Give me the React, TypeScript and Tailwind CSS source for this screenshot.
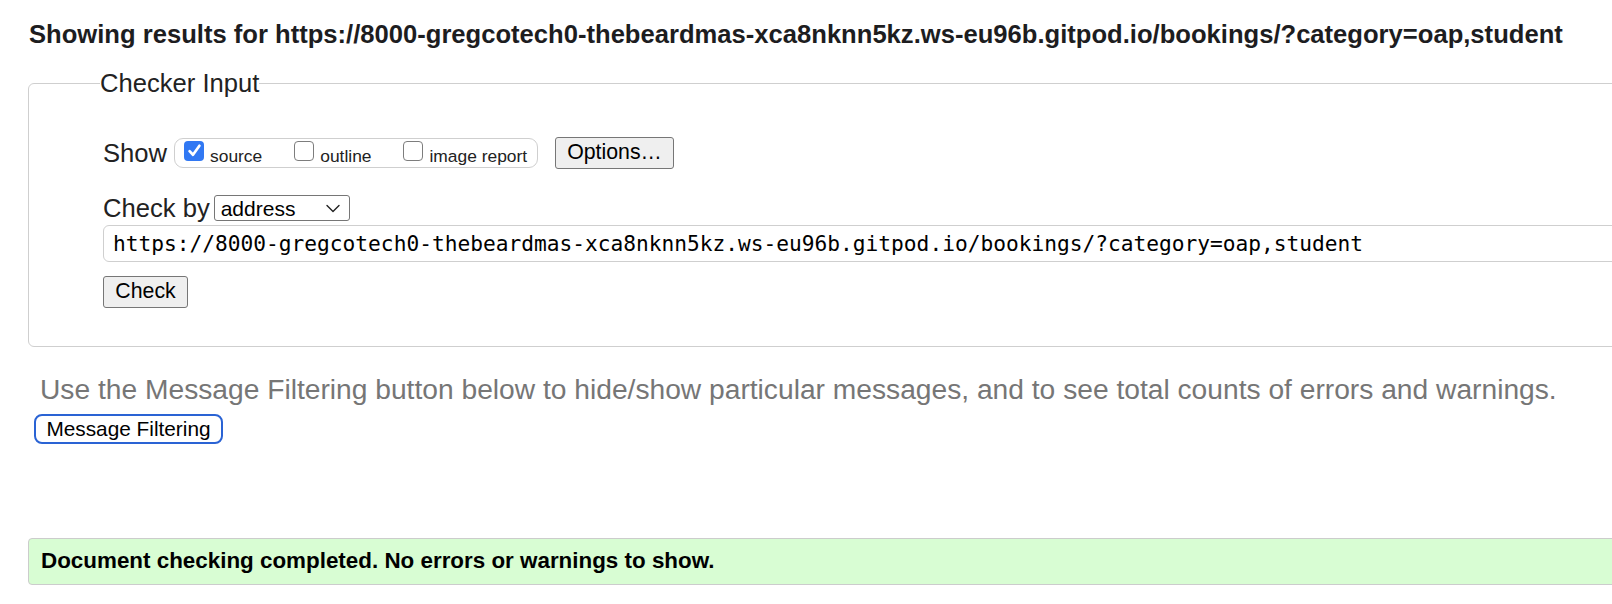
const URL =
  "https://8000-gregcotech0-thebeardmas-xca8nknn5kz.ws-eu96b.gitpod.io/bookings/?category=oap,student";

function Box({ checked }: { checked?: boolean }) {
  if (checked) {
    return (
      <span className="flex h-[20px] w-[20px] shrink-0 items-center justify-center rounded-[4px] bg-[#3178f3]">
        <svg width="15" height="15" viewBox="0 0 14 14" fill="none">
          <path d="M2.4 7.6 L5.6 11 L11.6 2.6" stroke="white" strokeWidth="2.5" strokeLinecap="round" strokeLinejoin="round" />
        </svg>
      </span>
    );
  }
  return <span className="h-[20px] w-[20px] shrink-0 rounded-[4px] border-[1.5px] border-[#7d7d7d] bg-white" />;
}

function Option({ label, checked }: { label: string; checked?: boolean }) {
  return (
    <span className="flex items-start gap-[6px]">
      <Box checked={checked} />
      <span className="pt-[5px] text-[17.4px] leading-[20px] text-[#222]">{label}</span>
    </span>
  );
}

export default function App() {
  return (
    <div className="h-[604px] w-full overflow-hidden bg-white font-['Liberation_Sans',Arial,sans-serif] text-[#222]">
      <h2 className="whitespace-nowrap pl-[29px] pt-[20px] text-[25.6px] font-bold leading-[28px] text-[#1d1d1f]">
        Showing results for {URL}
      </h2>

      <fieldset className="ml-[28px] mt-[21px] w-[1700px] rounded-[6px] border border-[#cfcfcf] pb-[38px] pl-[74px] pt-[40px]">
        <legend className="-ml-[3px] text-[25.6px] leading-[28px]">Checker Input</legend>

        <div className="flex h-[32px] items-center">
          <span className="text-[25.6px] leading-[28px]">Show</span>
          <div className="ml-[7px] flex h-[30px] w-[364px] items-center gap-[32px] rounded-[9px] border border-[#cfcfcf] pl-[9px]">
            <Option label="source" checked />
            <Option label="outline" />
            <Option label="image report" />
          </div>
          <button className="ml-[17px] h-[32px] w-[119px] rounded-[3px] border border-[#767676] bg-[#efefef] text-[21.3px] leading-none text-black">
            Options…
          </button>
        </div>

        <div className="mt-[26px] flex h-[26px] items-center">
          <span className="text-[25.6px] leading-[28px]">Check by</span>
          <div className="ml-[4px] flex h-[26px] w-[136px] items-center justify-between rounded-[3px] border border-[#767676] bg-white pl-[6px] pr-[9px]">
            <span className="text-[21px] leading-none text-black">address</span>
            <svg width="14" height="9" viewBox="0 0 14 9" fill="none">
              <path d="M1 1.5 L7 7.5 L13 1.5" stroke="#222" strokeWidth="1.4" strokeLinecap="round" strokeLinejoin="round" />
            </svg>
          </div>
        </div>

        <input
          type="text"
          readOnly
          value={URL}
          className="mt-[4px] block h-[37px] w-[1620px] rounded-[6px] border border-[#cfcfcf] bg-white pl-[9px] font-['DejaVu_Sans_Mono',monospace] text-[21.2px] text-black outline-none"
        />

        <button className="mt-[14px] block h-[32px] w-[85px] rounded-[3px] border border-[#767676] bg-[#efefef] text-[21.3px] leading-none text-black">
          Check
        </button>
      </fieldset>

      <p className="mt-[26px] whitespace-nowrap pl-[40px] text-[28.2px] leading-[32px] text-[#767676]">
        Use the Message Filtering button below to hide/show particular messages, and to see total counts of errors and warnings.
      </p>

      <button className="ml-[34px] mt-[9px] block h-[30px] w-[189px] rounded-[8px] border-2 border-[#2a63d4] bg-white text-[20.8px] leading-none text-black">
        Message Filtering
      </button>

      <div className="ml-[28px] mt-[94px] flex h-[47px] w-[1700px] items-center rounded-l-[4px] border border-[#cccccc] bg-[#d8fdd3] pl-[12px]">
        <span className="text-[22.4px] font-bold leading-none text-black">
          Document checking completed. No errors or warnings to show.
        </span>
      </div>
    </div>
  );
}
